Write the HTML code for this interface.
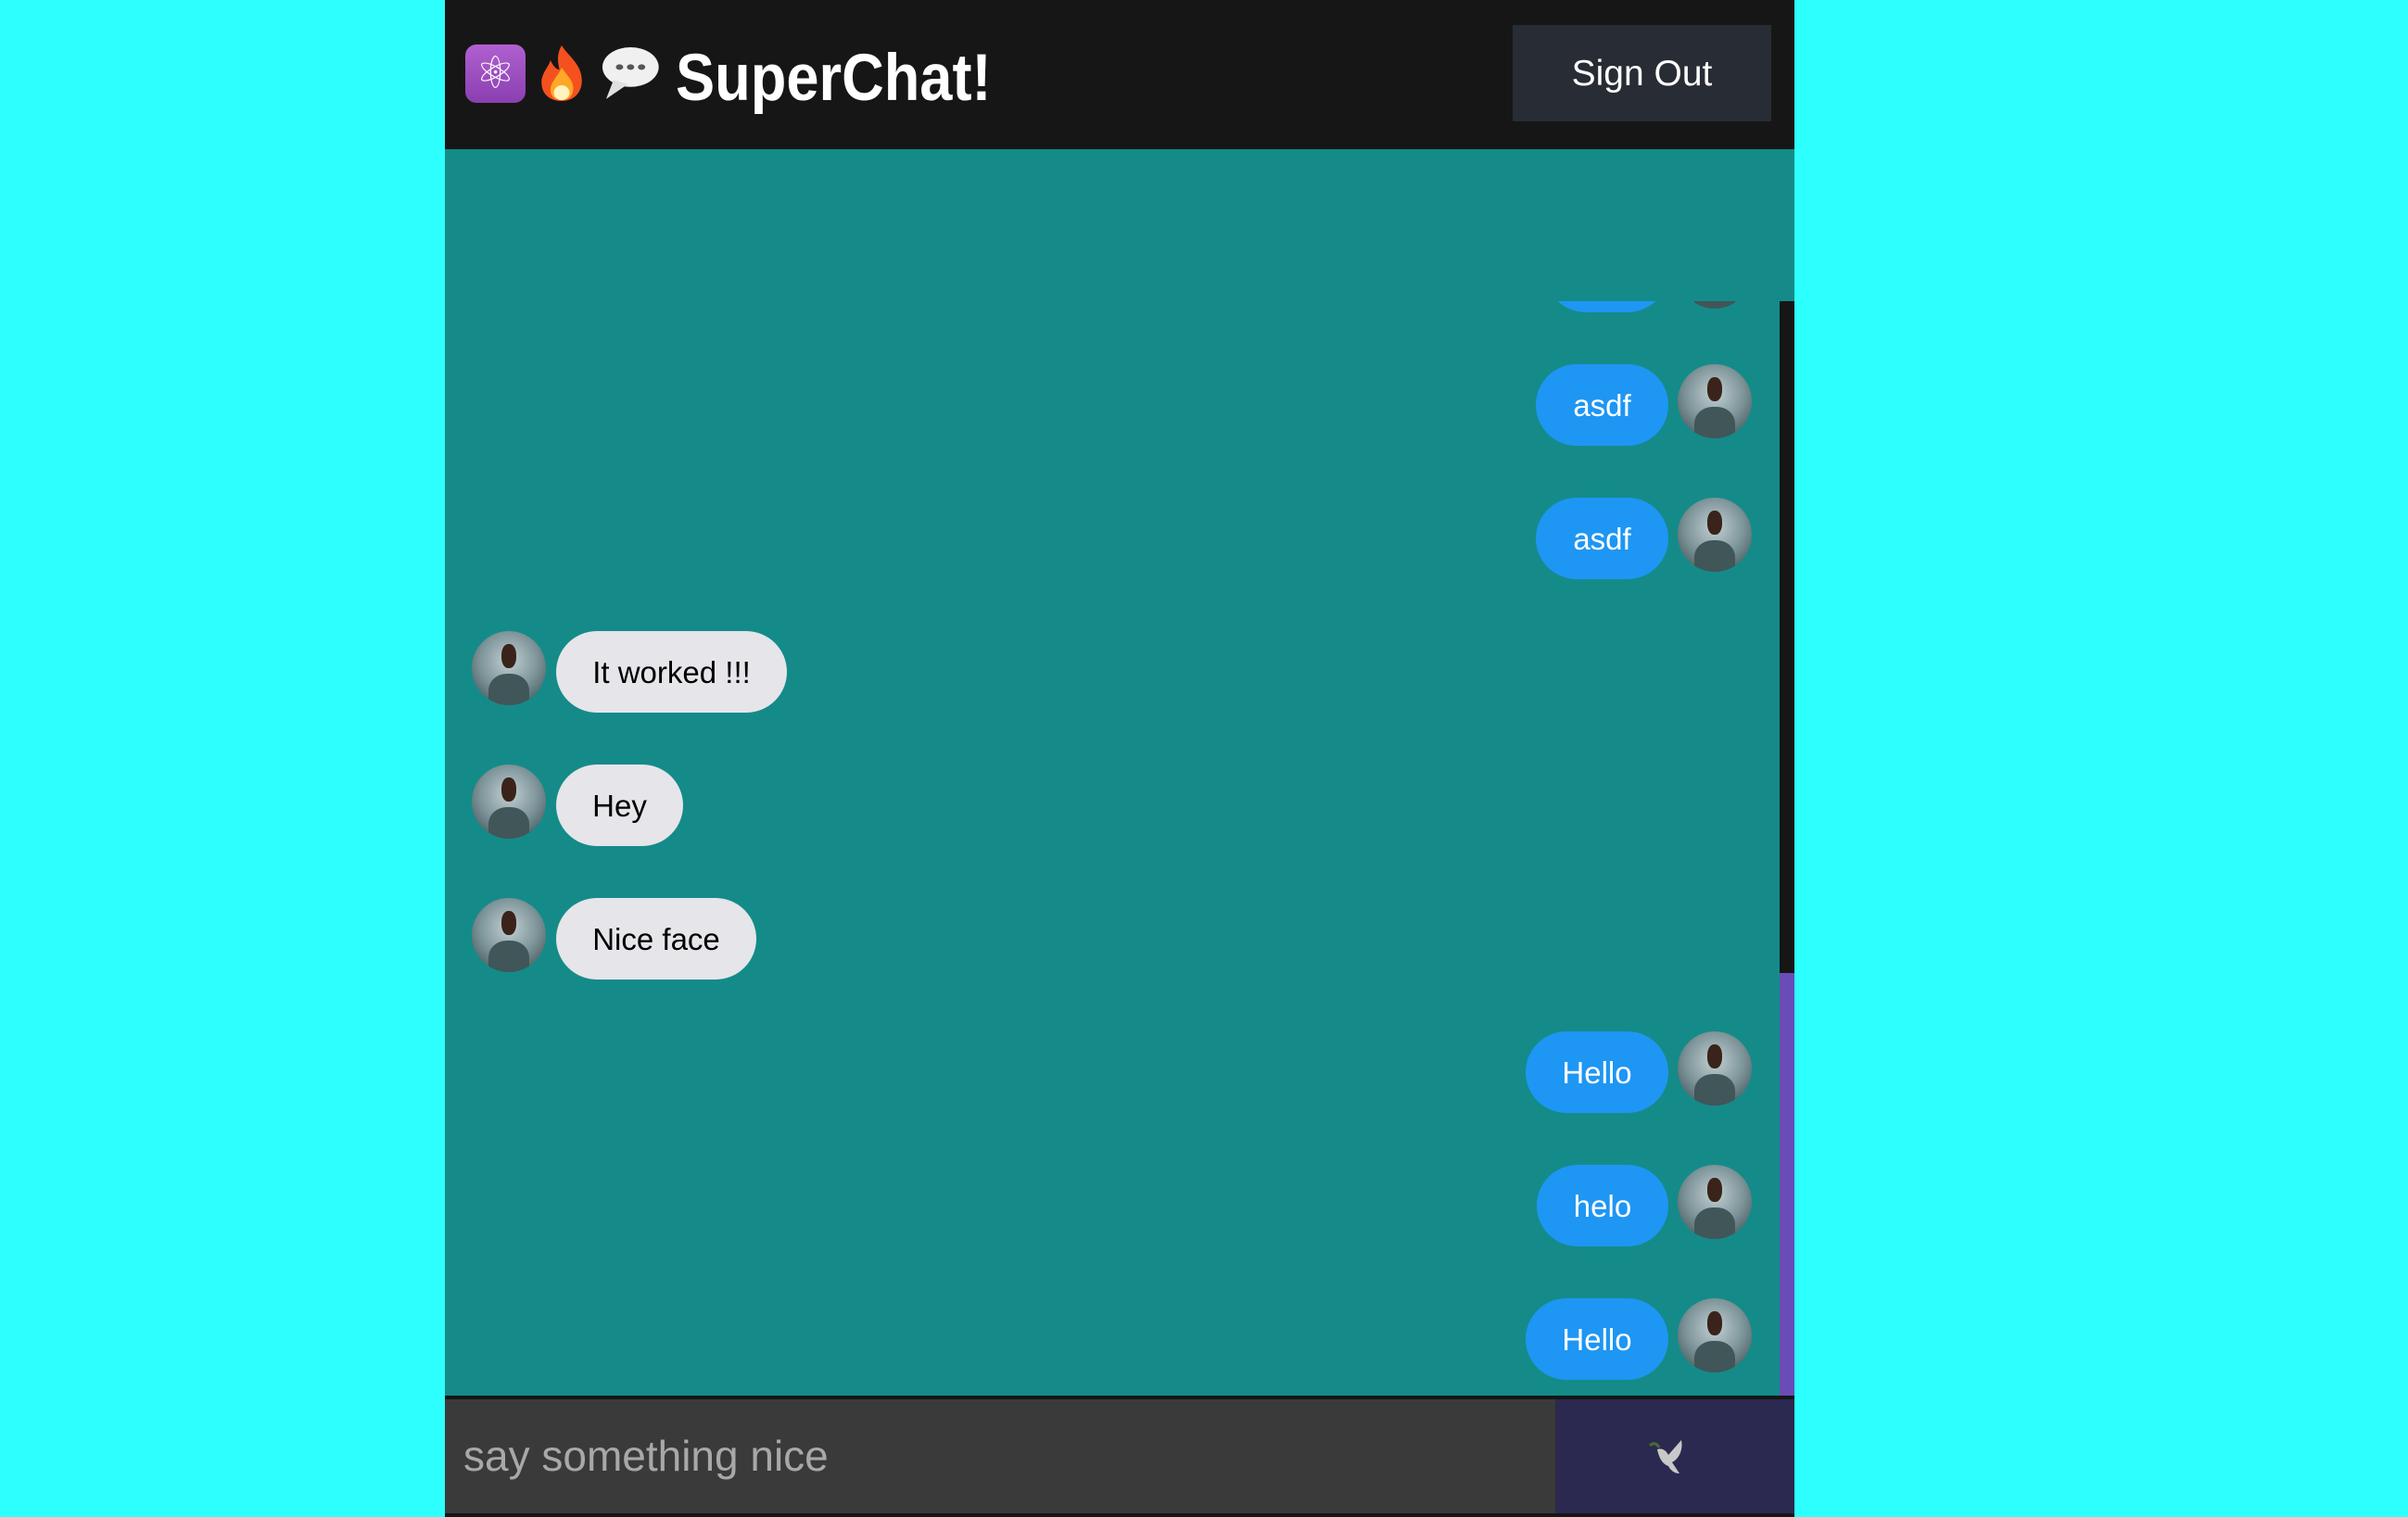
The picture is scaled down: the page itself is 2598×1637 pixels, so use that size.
<!DOCTYPE html>
<html><head><meta charset="utf-8"><style>
*{margin:0;padding:0;box-sizing:border-box}
body{width:2598px;height:1637px;background:#2dffff;font-family:"Liberation Sans","DejaVu Sans",sans-serif;overflow:hidden;position:relative}
.app{position:absolute;left:480px;top:0;width:1456px;height:1637px;background:#148b89}
.hdr{position:absolute;left:0;top:0;width:1456px;height:161px;background:#161616}
.title{position:absolute;left:249px;top:47px;font-size:71px;font-weight:bold;color:#fff;white-space:nowrap;line-height:76px;transform:scaleX(0.89);transform-origin:left center}
.atom{position:absolute;left:22px;top:48px;width:65px;height:63px;border-radius:12px;background:linear-gradient(#b060d0,#8a3fb0);color:#fff;font-size:48px;text-align:center;line-height:63px;font-family:"DejaVu Sans",sans-serif}
.fire{position:absolute;left:97px;top:47px;width:58px;height:64px}
.bub{position:absolute;left:166px;top:48px;width:66px;height:63px}
.so{position:absolute;left:1152px;top:27px;width:279px;height:104px;background:#282c34;color:#fff;font-size:39px;display:flex;align-items:center;justify-content:center;padding-top:2px}
.track{position:absolute;left:1440px;top:325px;width:16px;height:725px;background:#161616}
.thumb{position:absolute;left:1440px;top:1050px;width:16px;height:456px;background:#6a4cb7}
.clip{position:absolute;left:0;top:325px;width:1440px;height:1181px;overflow:hidden}
.b{position:absolute;height:88px;border-radius:44px;font-size:33px;display:flex;align-items:center;justify-content:center;line-height:1}
.r{background:#1e96f4;color:#fff}
.l{background:#e5e5ea;color:#000}
.av{position:absolute;width:80px;height:80px;border-radius:50%;background:radial-gradient(circle at 50% 40%,#c2d0d3 0%,#7d9499 50%,#2f4348 100%);overflow:hidden}
.av::before{content:"";position:absolute;left:32px;top:14px;width:16px;height:26px;border-radius:45%;background:#3a231a}
.av::after{content:"";position:absolute;left:18px;top:46px;width:44px;height:40px;border-radius:45% 45% 0 0;background:#405659}
.ft{position:absolute;left:0;top:1506px;width:1456px;height:131px;background:#161616}
.in{position:absolute;left:0;top:1510px;width:1198px;height:123px;background:#3a3a3a;color:#a8a8a8;font-size:46px;padding-left:20px;line-height:123px}
.sd{position:absolute;left:1198px;top:1510px;width:258px;height:123px;background:#2b2950}
</style></head><body>
<div class="app">
<div class="hdr">
<div class="atom">⚛</div>
<svg class="fire" viewBox="0 0 48 64" preserveAspectRatio="none"><path d="M24 2C30 14 42 22 42 40C42 54 34 62 24 62C13 62 6 54 6 42C6 32 12 26 14 18C17 26 20 28 22 28C20 18 20 10 24 2Z" fill="#f4511e"/><path d="M24 26C30 36 36 42 34 52C33 58 29 61 24 61C18 61 14 57 14 50C14 42 20 36 24 26Z" fill="#ffa726"/><ellipse cx="24" cy="53" rx="7" ry="8" fill="#fff3c0"/></svg>
<svg class="bub" viewBox="0 0 50 62" preserveAspectRatio="none"><ellipse cx="26" cy="24" rx="23" ry="21" fill="#f0f0f0"/><path d="M12 38L6 58L24 42Z" fill="#e0e0e0"/><circle cx="17" cy="24" r="3" fill="#555"/><circle cx="26" cy="24" r="3" fill="#555"/><circle cx="35" cy="24" r="3" fill="#555"/></svg>
<div class="title">SuperChat!</div>
<div class="so">Sign Out</div>
</div>
<div class="clip">
<div class="b r" style="left:1187px;top:-76px;width:133px"></div>
<div class="av" style="left:1330px;top:-72px"></div>
<div class="b r" style="left:1177px;top:68px;width:143px">asdf</div><div class="av" style="left:1330px;top:68px"></div>
<div class="b r" style="left:1177px;top:212px;width:143px">asdf</div><div class="av" style="left:1330px;top:212px"></div>
<div class="av" style="left:29px;top:356px"></div><div class="b l" style="left:120px;top:356px;width:249px">It worked !!!</div>
<div class="av" style="left:29px;top:500px"></div><div class="b l" style="left:120px;top:500px;width:137px">Hey</div>
<div class="av" style="left:29px;top:644px"></div><div class="b l" style="left:120px;top:644px;width:216px">Nice face</div>
<div class="b r" style="left:1166px;top:788px;width:154px">Hello</div><div class="av" style="left:1330px;top:788px"></div>
<div class="b r" style="left:1178px;top:932px;width:142px">helo</div><div class="av" style="left:1330px;top:932px"></div>
<div class="b r" style="left:1166px;top:1076px;width:154px">Hello</div><div class="av" style="left:1330px;top:1076px"></div>
</div>
<div class="track"></div><div class="thumb"></div>
<div class="ft"></div>
<div class="in">say something nice</div>
<div class="sd"><svg style="position:absolute;left:100px;top:40px" width="44" height="44" viewBox="0 0 44 44"><path d="M2 10C6 6 10 8 12 12" stroke="#4a6a30" stroke-width="3" fill="none"/><path d="M10 14C16 12 20 16 22 20L36 4C38 14 34 24 26 28L34 40C28 40 24 36 22 32C16 30 12 24 10 14Z" fill="#c8c8c8"/></svg></div>
</div>
</body></html>
